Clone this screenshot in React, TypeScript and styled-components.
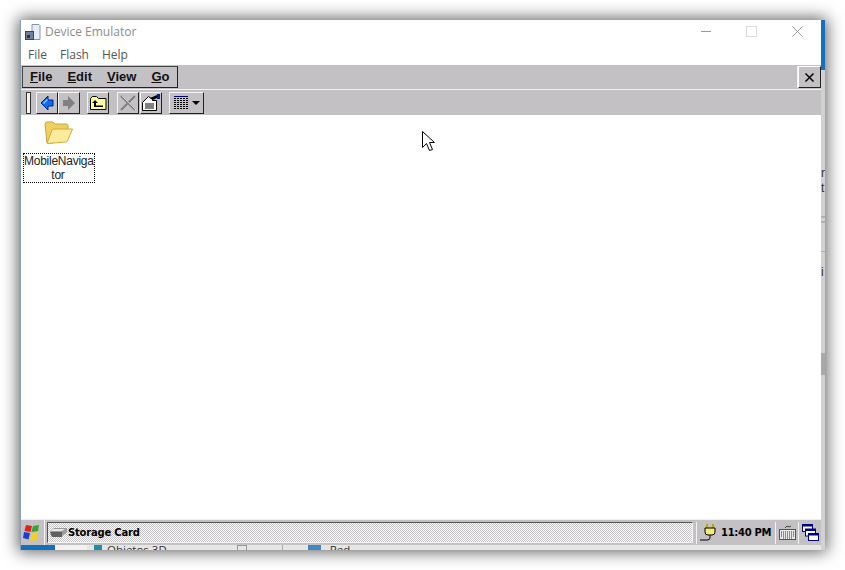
import React from 'react'
import styled, { createGlobalStyle } from 'styled-components'

const GlobalStyle = createGlobalStyle`
    html, body {
        margin: 0;
        padding: 0;
        background: #fff;
    }
`

const CE_GRAY = '#c3c1c3'

const App: React.FC = () => {
    return (
        <SPage>
            <GlobalStyle />
            <SWindow>
                <SMain>
                    <STitleBar>
                        <DeviceIcon />
                        <STitle>Device Emulator</STitle>
                        <SWindowControls>
                            <SMinimize />
                            <SMaximize />
                            <SCloseGlyph viewBox="0 0 13 13">
                                <path d="M.5.5l12 12M12.5.5l-12 12" stroke="#8a8a8a" strokeWidth="1" fill="none" />
                            </SCloseGlyph>
                        </SWindowControls>
                    </STitleBar>
                    <SHostMenu>
                        <SHostMenuItem>File</SHostMenuItem>
                        <SHostMenuItem>Flash</SHostMenuItem>
                        <SHostMenuItem>Help</SHostMenuItem>
                    </SHostMenu>
                    <SCeMenuBar>
                        <SCeMenuGroup>
                            <SCeMenuItem><u>F</u>ile</SCeMenuItem>
                            <SCeMenuItem><u>E</u>dit</SCeMenuItem>
                            <SCeMenuItem><u>V</u>iew</SCeMenuItem>
                            <SCeMenuItem><u>G</u>o</SCeMenuItem>
                        </SCeMenuGroup>
                        <SCeClose>
                            <svg width="11" height="11" viewBox="0 0 11 11">
                                <path d="M1.500 1.500l8 8M9.500 1.500l-8 8" stroke="#000" strokeWidth="1.500" fill="none" />
                            </svg>
                        </SCeClose>
                    </SCeMenuBar>
                    <SCeToolbar>
                        <SGripper />
                        <SToolButton>
                            <svg width="14" height="16" viewBox="0 0 14 16">
                                <path d="M8 1L1 8l7 7v-4h5V5H8z" fill="#0a6cf0" stroke="#00208a" strokeWidth="1" />
                                <path d="M7 4L3 8l1 1 4-4z" fill="#7fd0ff" />
                            </svg>
                        </SToolButton>
                        <SToolButton>
                            <svg width="14" height="16" viewBox="0 0 14 16">
                                <path d="M6 1l7 7-7 7v-4H1V5h5z" fill="#808080" />
                            </svg>
                        </SToolButton>
                        <SToolButton $gap={7}>
                            <svg width="18" height="14" viewBox="0 0 18 14">
                                <path d="M1.500 13.500v-11l2-2h4l2 2h7.500v11z" fill="#ffff9c" stroke="#000" />
                                <path d="M6 4L3 7h2v4h9v-1.500H7V7h2z" fill="#000" />
                            </svg>
                        </SToolButton>
                        <SToolButton $gap={8}>
                            <svg width="18" height="18" viewBox="0 0 18 18">
                                <path d="M2 2l14 14M16 2L2 16" stroke="#808080" strokeWidth="2" fill="none" />
                                <path d="M3 2l14 14" stroke="#fff" strokeWidth=".6" fill="none" />
                            </svg>
                        </SToolButton>
                        <SToolButton $gap={1}>
                            <svg width="18" height="17" viewBox="0 0 18 17">
                                <path d="M.5 8.500l6-6 4 3v1h4v10H.5z" fill="#fff" stroke="#000" />
                                <path d="M3 10h9M3 12h9M3 14h9" stroke="#000" />
                                <path d="M8 4l7-3v3l-4 2z" fill="#000" />
                                <rect x="15" y="0" width="3" height="5" fill="#00208a" />
                            </svg>
                        </SToolButton>
                        <SViewButton>
                            <svg width="16" height="14" viewBox="0 0 16 14">
                                <path d="M1 .5h14" stroke="#000080" />
                                <path d="M1 2.500h14M1 4.500h14M1 6.500h14M1 8.500h14M1 10.500h14M1 12.500h14" stroke="#000" strokeDasharray="2 1" />
                            </svg>
                            <SCaret />
                        </SViewButton>
                    </SCeToolbar>
                    <SContent>
                        <SFolderItem>
                            <SFolderGraphic>
                                <svg width="30" height="25" viewBox="0 0 30 25">
                                    <path d="M3 23L1 4q0-2 2-2h6l2 2h11q2 0 2 2v3L9 23z" fill="#f0cf5e" stroke="#c9a63c" />
                                    <path d="M3.500 23.500q-1 0 0-1.500L8 10q.5-1 2-1h18.500l-5 12q-.5 1-2 1z" fill="#fcec9c" stroke="#d0ab3e" />
                                </svg>
                            </SFolderGraphic>
                            <SFolderLabel>MobileNaviga<br />tor</SFolderLabel>
                        </SFolderItem>
                        <SCursor width="13" height="21" viewBox="0 0 13 21">
                            <path d="M.5.500v16l4-4 3 7 3-1-3-7h5z" fill="#fff" stroke="#000" />
                        </SCursor>
                    </SContent>
                    <STaskbar>
                        <SStartButton>
                            <svg width="18" height="18" viewBox="0 0 18 18">
                                <path d="M3 1l6 1-1.500 6-6-1z" fill="#e02020" />
                                <path d="M10 2l6-1-1 6-6.500 1z" fill="#2fa82f" />
                                <path d="M1 8l6 1-1.500 6.500-5.500-1.500z" fill="#1a3fd0" />
                                <path d="M8.500 9.500L15 8l-1.500 8-6.500 1z" fill="#f2d21d" />
                            </svg>
                        </SStartButton>
                        <STaskButton>
                            <svg width="19" height="12" viewBox="0 0 19 12">
                                <path d="M1 5l4-4h13v4l-6 5H3z" fill="#9a9a9a" />
                                <path d="M1 5h12v5H3z" fill="#606060" />
                                <path d="M4 2h12l-3 2H2z" fill="#e8e8e8" />
                            </svg>
                            <STaskLabel>Storage Card</STaskLabel>
                        </STaskButton>
                        <STrayGroup>
                            <SPlug width="18" height="19" viewBox="0 0 18 19">
                                <path d="M7 1v4M13 1v4" stroke="#b8a800" strokeWidth="2" />
                                <path d="M5 5h10v4q0 3-3 3H8q-3 0-3-3z" fill="#f2ec70" stroke="#000" />
                                <path d="M10 12v3q0 2-3 2H0" stroke="#000" fill="none" />
                            </SPlug>
                            <STime>11:40 PM</STime>
                        </STrayGroup>
                        <STrayCell $width={23}>
                            <svg width="17" height="15" viewBox="0 0 17 15">
                                <path d="M6 3l2-2 2 1 2-1" stroke="#444" fill="none" />
                                <rect x=".5" y="4.500" width="16" height="10" fill="#e8e8e8" stroke="#555" />
                                <path d="M2 7h13M2 9h13M2 11h13M4 13h9" stroke="#333" strokeDasharray="1 1" />
                            </svg>
                        </STrayCell>
                        <STrayCell $width={22}>
                            <svg width="17" height="17" viewBox="0 0 17 17">
                                <rect x=".5" y=".5" width="10" height="7" fill="#fff" stroke="#000080" />
                                <rect x=".5" y=".5" width="10" height="2" fill="#000080" />
                                <rect x="3.500" y="5" width="10" height="7" fill="#fff" stroke="#000080" />
                                <rect x="3.500" y="5" width="10" height="2" fill="#000080" />
                                <rect x="6.500" y="9.500" width="10" height="7" fill="#fff" stroke="#000080" />
                                <rect x="6.500" y="9.500" width="10" height="2" fill="#000080" />
                            </svg>
                        </STrayCell>
                    </STaskbar>
                    <SBehindStrip>
                        <SBehindBlue />
                        <SBehindPale />
                        <SBehindSquare />
                        <SBehindText>Objetos 3D</SBehindText>
                        <SBehindDoc />
                        <SBehindRule />
                        <SBehindNet />
                        <SBehindText>Red</SBehindText>
                    </SBehindStrip>
                </SMain>
                <SRightEdge>
                    <SEdgeBlock $height={50} $color="#1270bd" />
                    <SEdgeBlock $height={96} $color="#d2d2d2" />
                    <SEdgeText>r</SEdgeText>
                    <SEdgeText>t</SEdgeText>
                    <SEdgeBlock $height={20} $color="#d2d2d2" />
                    <SEdgeBlock $height={2} $color="#b0b0b0" />
                    <SEdgeBlock $height={3} $color="#d2d2d2" />
                    <SEdgeBlock $height={2} $color="#b0b0b0" />
                    <SEdgeBlock $height={28} $color="#d2d2d2" />
                    <SEdgeBlock $height={1} $color="#b0b0b0" />
                    <SEdgeBlock $height={13} $color="#d2d2d2" />
                    <SEdgeText>i</SEdgeText>
                    <SEdgeBlock $height={73} $color="#d2d2d2" />
                    <SEdgeBlock $height={22} $color="#a9a9a9" />
                    <SEdgeFill />
                </SRightEdge>
            </SWindow>
        </SPage>
    )
}

export default App

const DeviceIcon: React.FC = () => (
    <svg width="16" height="16" viewBox="0 0 16 16">
        <path d="M7 .5h7l1 1v14H7z" fill="#e4ecf6" stroke="#8394ab" />
        <rect x=".5" y="7.500" width="8" height="8" fill="#6f8199" stroke="#33465f" />
        <rect x="2" y="11" width="3" height="3" fill="#22334a" />
    </svg>
)

const SPage = styled.div`
    width: 845px;
    height: 570px;
    padding: 20px 20px 20px 20px;
    box-sizing: border-box;
    overflow: hidden;
    background: #fff;
`

const SWindow = styled.div`
    height: 530px;
    display: flex;
    background: #fff;
    box-shadow: 0 0 15px 2px rgba(0, 0, 0, .62);
`

const SMain = styled.div`
    flex: 1;
    min-width: 0;
    display: flex;
    flex-direction: column;
    border-left: 1px solid #8aa0ad;
`

const SRightEdge = styled.div`
    width: 4px;
    display: flex;
    flex-direction: column;
    overflow: hidden;
`

const SEdgeBlock = styled.div<{ $height: number, $color: string }>`
    height: ${p => p.$height}px;
    flex-shrink: 0;
    background: ${p => p.$color};
`

const SEdgeFill = styled.div`
    flex: 1;
    background: #d2d2d2;
`

const SEdgeText = styled.div`
    height: 15px;
    flex-shrink: 0;
    font: 12px/15px "Liberation Sans", sans-serif;
    color: #333;
    background: #d2d2d2;
`

const STitleBar = styled.div`
    height: 26px;
    flex-shrink: 0;
    box-sizing: border-box;
    padding: 0 0 3px 4px;
    display: flex;
    align-items: center;
`

const STitle = styled.span`
    margin-left: 4px;
    font: 12px "Open Sans", sans-serif;
    color: #8c8c8c;
`

const SWindowControls = styled.div`
    margin-left: auto;
    display: flex;
    align-items: center;
`

const SMinimize = styled.div`
    width: 10px;
    height: 1px;
    margin-right: 35px;
    background: #9a9a9a;
`

const SMaximize = styled.div`
    width: 9px;
    height: 9px;
    margin-right: 35px;
    border: 1px solid #dcdcdc;
`

const SCloseGlyph = styled.svg`
    width: 11px;
    height: 11px;
    margin-right: 18px;
`

const SHostMenu = styled.div`
    height: 19px;
    flex-shrink: 0;
    box-sizing: border-box;
    padding: 0 0 2px 7px;
    display: flex;
    align-items: center;
    gap: 13px;
`

const SHostMenuItem = styled.span`
    font: 12px "Open Sans", sans-serif;
    color: #555;
`

const SCeMenuBar = styled.div`
    height: 25px;
    flex-shrink: 0;
    display: flex;
    align-items: center;
    justify-content: space-between;
    box-sizing: border-box;
    padding-left: 1px;
    background: ${CE_GRAY};
    border-bottom: 1px solid #f2f2f2;
`

const SCeMenuGroup = styled.div`
    width: 156px;
    height: 22px;
    box-sizing: border-box;
    display: flex;
    align-items: center;
    gap: 15px;
    padding: 0 0 1px 7px;
    border: 1px solid #222;
    border-top-color: #444;
    border-left-color: #444;
`

const SCeMenuItem = styled.span`
    font: bold 13px "Liberation Sans", sans-serif;
    color: #111;
`

const SCeClose = styled.div`
    width: 23px;
    height: 22px;
    box-sizing: border-box;
    display: flex;
    align-items: center;
    justify-content: center;
    background: ${CE_GRAY};
    border: 1px solid #fff;
    border-right-color: #222;
    border-bottom-color: #222;
    box-shadow: -1px 0 0 #f2f2f2;
`

const SCeToolbar = styled.div`
    height: 25px;
    flex-shrink: 0;
    display: flex;
    align-items: center;
    box-sizing: border-box;
    padding-left: 5px;
    background: ${CE_GRAY};
`

const SGripper = styled.div`
    width: 3px;
    height: 20px;
    margin-right: 5px;
    background: #f4f4f4;
    border: 1px solid #333;
`

const SToolButton = styled.div<{ $gap?: number }>`
    width: 22px;
    height: 22px;
    box-sizing: border-box;
    margin-left: ${p => p.$gap ?? 0}px;
    display: flex;
    align-items: center;
    justify-content: center;
    background: ${CE_GRAY};
    border: 1px solid #f4f4f4;
    border-right-color: #222;
    border-bottom-color: #222;
`

const SViewButton = styled(SToolButton)`
    width: 35px;
    margin-left: 7px;
    gap: 3px;
`

const SCaret = styled.span`
    width: 0;
    height: 0;
    border-left: 4px solid transparent;
    border-right: 4px solid transparent;
    border-top: 4px solid #000;
`

const SContent = styled.div`
    position: relative;
    flex: 1;
    min-height: 0;
    padding: 5px 0 0 2px;
    background: #fff;
`

const SFolderItem = styled.div`
    width: 72px;
    display: flex;
    flex-direction: column;
    align-items: center;
`

const SFolderGraphic = styled.div`
    height: 28px;
    margin-bottom: 5px;
    display: flex;
`

const SFolderLabel = styled.div`
    width: 72px;
    height: 30px;
    box-sizing: border-box;
    border: 1px dotted #000;
    padding-right: 2px;
    font: 12px/14px "Liberation Sans", sans-serif;
    letter-spacing: -.25px;
    text-align: center;
    white-space: nowrap;
    color: #222;
`

const SCursor = styled.svg`
    position: absolute;
    left: 401px;
    top: 16px;
`

const STaskbar = styled.div`
    height: 26px;
    flex-shrink: 0;
    display: flex;
    align-items: center;
    box-sizing: border-box;
    background: ${CE_GRAY};
    border-top: 1px solid #eee;
`

const SStartButton = styled.div`
    width: 24px;
    height: 100%;
    flex-shrink: 0;
    box-sizing: border-box;
    display: flex;
    align-items: center;
    padding-left: 2px;
    border-right: 1px solid #f4f4f4;
`

const STaskButton = styled.div`
    flex: 1;
    height: 21px;
    margin: 0 3px 0 2px;
    box-sizing: border-box;
    display: flex;
    align-items: center;
    gap: 0;
    padding-left: 1px;
    border: 1px solid #555;
    border-right-color: #f4f4f4;
    border-bottom-color: #f4f4f4;
    background: repeating-conic-gradient(#c3c1c3 0 25%, #fff 0 50%) 0 0 / 2px 2px;
`

const STaskLabel = styled.span`
    font: bold 10px "DejaVu Sans", sans-serif;
    letter-spacing: -.2px;
    color: #000;
`

const STrayGroup = styled.div`
    width: 80px;
    height: 22px;
    flex-shrink: 0;
    box-sizing: border-box;
    display: flex;
    align-items: center;
    gap: 3px;
    padding-left: 3px;
    border-left: 1px solid #f4f4f4;
    border-right: 1px solid #f4f4f4;
`

const SPlug = styled.svg`
    flex-shrink: 0;
`

const STime = styled.span`
    font: bold 10px "DejaVu Sans", sans-serif;
    letter-spacing: -.3px;
    white-space: nowrap;
    color: #000;
`

const STrayCell = styled.div<{ $width: number }>`
    width: ${p => p.$width}px;
    height: 22px;
    flex-shrink: 0;
    box-sizing: border-box;
    display: flex;
    align-items: center;
    justify-content: center;
    border-right: 1px solid #f4f4f4;
    &:last-child {
        border-right: 0;
    }
`

const SBehindStrip = styled.div`
    height: 5px;
    flex-shrink: 0;
    display: flex;
    overflow: hidden;
    background: #e6e6e6;
`

const SBehindBlue = styled.div`
    width: 34px;
    background: #1270bd;
`

const SBehindPale = styled.div`
    width: 32px;
    background: #f2f2f2;
`

const SBehindSquare = styled.div`
    width: 8px;
    margin: 0 5px 0 7px;
    background: #1a8fa8;
`

const SBehindText = styled.span`
    font: 11.500px/10px "Open Sans", sans-serif;
    color: #333;
`

const SBehindDoc = styled.div`
    width: 10px;
    margin-left: 70px;
    box-sizing: border-box;
    border: 1px solid #999;
    border-bottom: 0;
`

const SBehindRule = styled.div`
    width: 1px;
    margin-left: 35px;
    background: #aaa;
`

const SBehindNet = styled.div`
    width: 13px;
    margin: 0 9px 0 25px;
    background: #3f86c6;
`
